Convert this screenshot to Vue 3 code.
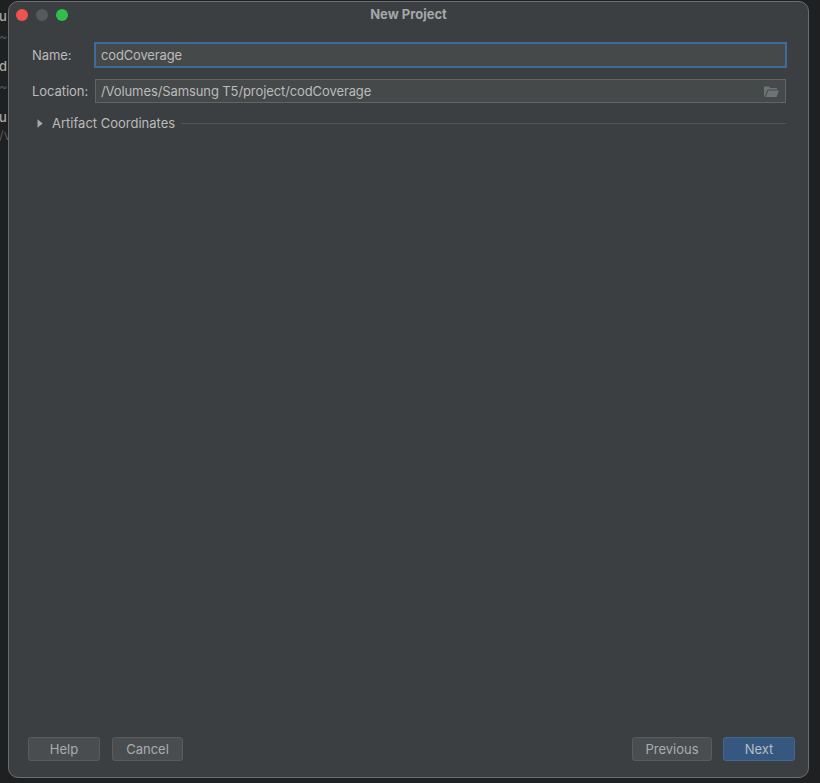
<script setup>
const leftButtons = ['Help', 'Cancel']
</script>

<template>
  <div class="desktop">
    <div class="behind">
      <span class="b1">u</span><span class="b2">~</span>
      <span class="b3">d</span><span class="b4">~</span>
      <span class="b5">u</span><span class="b6">/v</span>
    </div>
    <main class="dialog">
      <header class="titlebar">
        <div class="lights">
          <i class="light red"></i><i class="light grey"></i><i class="light green"></i>
        </div>
        <h1>New Project</h1>
      </header>
      <section class="form">
        <div class="row first">
          <label>Name:</label>
          <div class="input focused">codCoverage</div>
        </div>
        <div class="row second">
          <label>Location:</label>
          <div class="input path">
            <span>/Volumes/Samsung T5/project/codCoverage</span>
            <svg class="folder" width="15" height="11" viewBox="0 0 15 11">
              <path d="M0 10.500V0.500h5l1.300 1.500H13V3.600H3.600L0.800 10.500z" fill="#6d7476" />
              <path d="M4.300 4.400H15L12.600 11H1.600z" fill="#6d7476" />
            </svg>
          </div>
        </div>
        <div class="section">
          <svg class="caret" width="6" height="9" viewBox="0 0 6 9"><path d="M0.500 0.300 5.700 4.500 0.500 8.700z" fill="#a5a9aa" /></svg>
          <span>Artifact Coordinates</span>
          <div class="rule"></div>
        </div>
      </section>
      <footer class="actions">
        <button v-for="b in leftButtons" :key="b" type="button" class="btn" :class="b.toLowerCase()">{{ b }}</button>
        <div class="spacer"></div>
        <button type="button" class="btn prev">Previous</button>
        <button type="button" class="btn next">Next</button>
      </footer>
    </main>
  </div>
</template>

<style>
html, body { margin: 0; background: #1d1f20; }
</style>

<style scoped>
.desktop {
  position: relative;
  width: 820px;
  height: 783px;
  overflow: hidden;
  background: #1e2021;
  font-family: "Inter", "Liberation Sans", sans-serif;
  box-sizing: border-box;
  padding: 1px 11px 5px 8px;
}
.behind { position: absolute; inset: 0; color: #a6a9aa; font-size: 13px; font-weight: 500; }
.behind span { position: absolute; left: -1px; }
.b1 { top: 8px; }
.b2 { top: 28px; color: #555; font-weight: 400; }
.b3 { top: 58px; }
.b4 { top: 78px; color: #555; font-weight: 400; }
.b5 { top: 109px; }
.b6 { top: 127px; color: #555; font-weight: 400; }
.dialog {
  position: relative;
  height: 100%;
  box-sizing: border-box;
  background: #3b3f41;
  border: 1px solid #6b6e70;
  border-radius: 10px;
  display: flex;
  flex-direction: column;
  color: #bbbbbb;
  font-size: 13px;
}
.titlebar {
  height: 24px;
  display: flex;
  align-items: center;
  justify-content: center;
  position: relative;
  flex: none;
}
.titlebar h1 { margin: 0; font-size: 13px; font-weight: 700; color: #a3a7a8; }
.lights { position: absolute; left: 7px; top: 7px; display: flex; gap: 8px; }
.light { width: 12px; height: 12px; border-radius: 50%; display: block; }
.red { background: #ee5350; }
.grey { background: #57595b; }
.green { background: #2fc04b; }
.form { padding: 0 22px 0 23px; flex: 1; }
.row { display: flex; align-items: center; }
.row label { width: 63px; flex: none; color: #bbbbbb; letter-spacing: -0.05px; }
.first { margin-top: 16px; height: 26px; }
.second { margin-top: 11px; height: 24px; }
.input {
  box-sizing: border-box;
  background: #45494a;
  border: 1px solid #646464;
  height: 24px;
  display: flex;
  align-items: center;
  padding: 0 6px 0 5px;
  color: #bbbbbb;
  flex: 1;
  font-size: 13px;
  letter-spacing: -0.1px;
}
.focused {
  border: 2px solid #3f6b9c;
  height: 26px;
  margin: 0 -1px;
  padding: 0 5px;
  letter-spacing: -0.15px;
}
.path { justify-content: space-between; }
.section {
  display: flex;
  align-items: center;
  margin: 11px 0 0 5px;
  height: 18px;
}
.caret { margin-right: 9px; }
.rule { flex: 1; height: 1px; background: #515557; margin-left: 6px; }
.actions {
  flex: none;
  display: flex;
  gap: 12px;
  padding: 0 13px 16px 19px;
}
.spacer { flex: 1; }
.btn {
  box-sizing: border-box;
  width: 72px;
  height: 24px;
  border: 1px solid #585c5e;
  border-radius: 3px;
  background: #494d4f;
  color: #a9adae;
  font: inherit;
  padding: 0;
}
.cancel { width: 71px; }
.prev { width: 80px; margin-right: -1px; }
.next { background: #365880; border-color: #41688f; color: #b4bcc4; }
</style>
